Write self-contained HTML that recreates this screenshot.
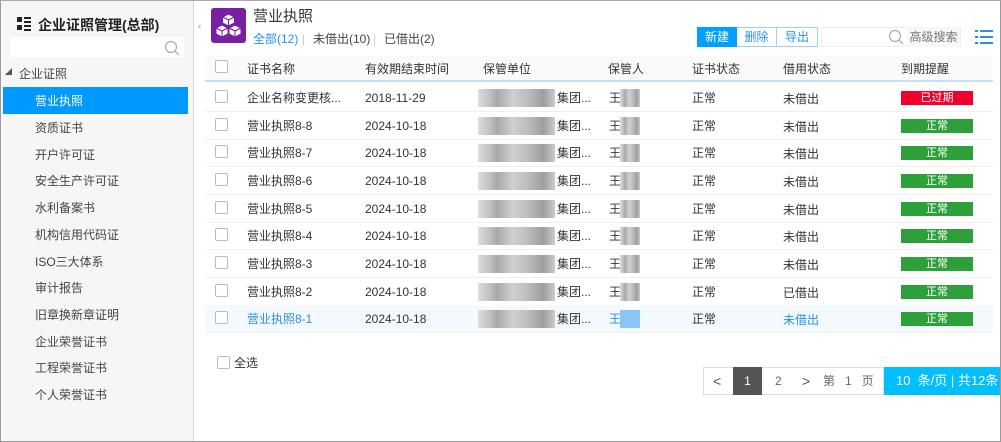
<!DOCTYPE html>
<html><head><meta charset="utf-8"><style>
*{margin:0;padding:0;box-sizing:border-box}
body{width:1001px;height:442px;overflow:hidden;background:#fff;font-family:"Liberation Sans","Noto Sans CJK SC",sans-serif;font-size:12px;color:#333;position:relative}
.a{position:absolute;white-space:nowrap;line-height:14px}
#frame{position:absolute;left:0;top:0;width:1001px;height:442px;border:1px solid #9a9a9a;border-top-color:#aaa;pointer-events:none}
#side{position:absolute;left:1px;top:1px;width:193px;height:440px;background:#f6f6f6;border-right:1px solid #d8d8d8}
.cb{position:absolute;width:13px;height:13px;border:1px solid #bbb;border-radius:2px;background:#fff}
.row{position:absolute;left:205px;width:788px;height:28px;border-bottom:1px solid #eef0f2}
.blur{position:absolute;height:18px;background:linear-gradient(90deg,#ddd 0,#c8c8c8 12%,#a8a8a8 25%,#d0d0d0 45%,#bcbcbc 65%,#9e9e9e 85%,#ccc 100%)}
.badge{position:absolute;left:696px;top:7px;width:72px;height:14px;background:#2ea03a;color:#fff;text-align:center;font-size:11px;line-height:14px}
.si{position:absolute;left:35px;color:#444;line-height:14px;white-space:nowrap}
</style></head><body>
<div id="side"></div>
<div class="a" style="left:17px;top:17px;width:14px;height:14px">
<div style="position:absolute;left:0;top:0;width:5px;height:5px;background:#222"></div>
<div style="position:absolute;left:0;top:8px;width:5px;height:5px;background:#222"></div>
<div style="position:absolute;left:7px;top:0;width:7px;height:2px;background:#222"></div>
<div style="position:absolute;left:7px;top:4px;width:7px;height:2px;background:#222"></div>
<div style="position:absolute;left:7px;top:8px;width:7px;height:2px;background:#222"></div>
<div style="position:absolute;left:7px;top:12px;width:7px;height:2px;background:#222"></div>
</div>
<div class="a" style="left:38px;top:17px;font-size:14px;line-height:16px;font-weight:bold;color:#222">企业证照管理(总部)</div>
<div class="a" style="left:10px;top:37px;width:174px;height:20px;background:#fff"></div>
<svg class="a" style="left:164px;top:40px" width="16" height="16"><circle cx="7" cy="7" r="5.5" fill="none" stroke="#aaa" stroke-width="1.2"/><line x1="11" y1="11" x2="15" y2="15" stroke="#aaa" stroke-width="1.2"/></svg>
<div class="a" style="left:5px;top:69px;font-size:7px;line-height:8px;color:#555">◢</div>
<div class="a" style="left:19px;top:67px;color:#444">企业证照</div>
<div class="a" style="left:3px;top:87px;width:185px;height:27px;background:#0099ff"></div>
<div class="a" style="left:35px;top:94px;color:#fff">营业执照</div>
<div class="si" style="top:121px">资质证书</div>
<div class="si" style="top:147.7px">开户许可证</div>
<div class="si" style="top:174.4px">安全生产许可证</div>
<div class="si" style="top:201.1px">水利备案书</div>
<div class="si" style="top:227.8px">机构信用代码证</div>
<div class="si" style="top:254.5px">ISO三大体系</div>
<div class="si" style="top:281.2px">审计报告</div>
<div class="si" style="top:307.9px">旧章换新章证明</div>
<div class="si" style="top:334.6px">企业荣誉证书</div>
<div class="si" style="top:361.3px">工程荣誉证书</div>
<div class="si" style="top:388px">个人荣誉证书</div>
<div class="a" style="left:198px;top:20px;color:#999;font-size:10px">‹</div>
<div class="a" style="left:211px;top:8px;width:35px;height:35px;background:#7b1fa2;border-radius:3px"></div>
<svg class="a" style="left:214px;top:11px" width="29" height="29" viewBox="0 0 29 29"><g fill="#fff" stroke="#7b1fa2" stroke-width="1"><path d="M14.5 3l6 3-6 3-6-3z"/><path d="M8.5 6l6 3v6l-6-3z"/><path d="M20.5 6l-6 3v6l6-3z"/><path d="M8 14l6 3-6 3-6-3z"/><path d="M2 17l6 3v6l-6-3z"/><path d="M14 17l-6 3v6l6-3z"/><path d="M21 14l6 3-6 3-6-3z"/><path d="M15 17l6 3v6l-6-3z"/><path d="M27 17l-6 3v6l6-3z"/></g></svg>
<div class="a" style="left:253px;top:8px;font-size:15px;line-height:18px;color:#333">营业执照</div>
<div class="a" style="left:253px;top:32px;color:#1e90ff">全部(12)</div>
<div class="a" style="left:302px;top:32px;color:#ccc">|</div>
<div class="a" style="left:313px;top:32px;color:#444">未借出(10)</div>
<div class="a" style="left:373px;top:32px;color:#ccc">|</div>
<div class="a" style="left:384px;top:32px;color:#444">已借出(2)</div>
<div class="a" style="left:697px;top:27px;width:121px;height:20px;border:1px solid #9ccff5"></div>
<div class="a" style="left:697px;top:27px;width:40px;height:20px;background:#00a0ff;color:#fff;text-align:center;line-height:20px">新建</div>
<div class="a" style="left:737px;top:27px;width:40px;height:20px;color:#2a8fe8;text-align:center;line-height:20px;border-right:1px solid #9ccff5">删除</div>
<div class="a" style="left:777px;top:27px;width:40px;height:20px;color:#2a8fe8;text-align:center;line-height:20px">导出</div>
<div class="a" style="left:821px;top:27px;width:140px;height:20px;background:#fff;border:1px solid #eee"></div>
<svg class="a" style="left:888px;top:29px" width="16" height="16"><circle cx="7" cy="7" r="5.5" fill="none" stroke="#aaa" stroke-width="1.2"/><line x1="11" y1="11" x2="15" y2="15" stroke="#aaa" stroke-width="1.2"/></svg>
<div class="a" style="left:907px;top:27px;width:53px;height:20px;background:#f7f7f7;color:#777;text-align:center;line-height:20px">高级搜索</div>
<svg class="a" style="left:975px;top:30px" width="18" height="14"><g fill="#2a8fe8"><rect x="0" y="0" width="3" height="2"/><rect x="5" y="0" width="13" height="2"/><rect x="0" y="6" width="3" height="2"/><rect x="5" y="6" width="13" height="2"/><rect x="0" y="12" width="3" height="2"/><rect x="5" y="12" width="13" height="2"/></g></svg>
<div class="a" style="left:205px;top:56px;width:788px;height:26px;background:#fafafa;border-bottom:2px solid #bfe0f7"></div>
<div class="cb" style="left:215px;top:60px"></div>
<div class="a" style="left:247px;top:62px">证书名称</div>
<div class="a" style="left:365px;top:62px">有效期结束时间</div>
<div class="a" style="left:483px;top:62px">保管单位</div>
<div class="a" style="left:608px;top:62px">保管人</div>
<div class="a" style="left:692px;top:62px">证书状态</div>
<div class="a" style="left:783px;top:62px">借用状态</div>
<div class="a" style="left:901px;top:62px">到期提醒</div>

<div class="row" style="top:84px"><div class="cb" style="left:10px;top:6px"></div><div class="a" style="left:42px;top:7px">企业名称变更核...</div><div class="a" style="left:160px;top:7px">2018-11-29</div><div class="blur" style="left:273px;top:5px;width:77px"></div><div class="a" style="left:352px;top:7px">集团...</div><div class="a" style="left:404px;top:7px">王</div><div class="blur" style="left:415px;top:5px;width:20px"></div><div class="a" style="left:487px;top:7px">正常</div><div class="a" style="left:578px;top:8px">未借出</div><div class="badge" style="background:#f0002a">已过期</div></div>
<div class="row" style="top:112px"><div class="cb" style="left:10px;top:6px"></div><div class="a" style="left:42px;top:7px">营业执照8-8</div><div class="a" style="left:160px;top:7px">2024-10-18</div><div class="blur" style="left:273px;top:5px;width:77px"></div><div class="a" style="left:352px;top:7px">集团...</div><div class="a" style="left:404px;top:7px">王</div><div class="blur" style="left:415px;top:5px;width:20px"></div><div class="a" style="left:487px;top:7px">正常</div><div class="a" style="left:578px;top:8px">未借出</div><div class="badge">正常</div></div>
<div class="row" style="top:139px"><div class="cb" style="left:10px;top:6px"></div><div class="a" style="left:42px;top:7px">营业执照8-7</div><div class="a" style="left:160px;top:7px">2024-10-18</div><div class="blur" style="left:273px;top:5px;width:77px"></div><div class="a" style="left:352px;top:7px">集团...</div><div class="a" style="left:404px;top:7px">王</div><div class="blur" style="left:415px;top:5px;width:20px"></div><div class="a" style="left:487px;top:7px">正常</div><div class="a" style="left:578px;top:8px">未借出</div><div class="badge">正常</div></div>
<div class="row" style="top:167px"><div class="cb" style="left:10px;top:6px"></div><div class="a" style="left:42px;top:7px">营业执照8-6</div><div class="a" style="left:160px;top:7px">2024-10-18</div><div class="blur" style="left:273px;top:5px;width:77px"></div><div class="a" style="left:352px;top:7px">集团...</div><div class="a" style="left:404px;top:7px">王</div><div class="blur" style="left:415px;top:5px;width:20px"></div><div class="a" style="left:487px;top:7px">正常</div><div class="a" style="left:578px;top:8px">未借出</div><div class="badge">正常</div></div>
<div class="row" style="top:195px"><div class="cb" style="left:10px;top:6px"></div><div class="a" style="left:42px;top:7px">营业执照8-5</div><div class="a" style="left:160px;top:7px">2024-10-18</div><div class="blur" style="left:273px;top:5px;width:77px"></div><div class="a" style="left:352px;top:7px">集团...</div><div class="a" style="left:404px;top:7px">王</div><div class="blur" style="left:415px;top:5px;width:20px"></div><div class="a" style="left:487px;top:7px">正常</div><div class="a" style="left:578px;top:8px">未借出</div><div class="badge">正常</div></div>
<div class="row" style="top:222px"><div class="cb" style="left:10px;top:6px"></div><div class="a" style="left:42px;top:7px">营业执照8-4</div><div class="a" style="left:160px;top:7px">2024-10-18</div><div class="blur" style="left:273px;top:5px;width:77px"></div><div class="a" style="left:352px;top:7px">集团...</div><div class="a" style="left:404px;top:7px">王</div><div class="blur" style="left:415px;top:5px;width:20px"></div><div class="a" style="left:487px;top:7px">正常</div><div class="a" style="left:578px;top:8px">未借出</div><div class="badge">正常</div></div>
<div class="row" style="top:250px"><div class="cb" style="left:10px;top:6px"></div><div class="a" style="left:42px;top:7px">营业执照8-3</div><div class="a" style="left:160px;top:7px">2024-10-18</div><div class="blur" style="left:273px;top:5px;width:77px"></div><div class="a" style="left:352px;top:7px">集团...</div><div class="a" style="left:404px;top:7px">王</div><div class="blur" style="left:415px;top:5px;width:20px"></div><div class="a" style="left:487px;top:7px">正常</div><div class="a" style="left:578px;top:8px">未借出</div><div class="badge">正常</div></div>
<div class="row" style="top:278px"><div class="cb" style="left:10px;top:6px"></div><div class="a" style="left:42px;top:7px">营业执照8-2</div><div class="a" style="left:160px;top:7px">2024-10-18</div><div class="blur" style="left:273px;top:5px;width:77px"></div><div class="a" style="left:352px;top:7px">集团...</div><div class="a" style="left:404px;top:7px">王</div><div class="blur" style="left:415px;top:5px;width:20px"></div><div class="a" style="left:487px;top:7px">正常</div><div class="a" style="left:578px;top:8px">已借出</div><div class="badge">正常</div></div>
<div class="row" style="top:305px;background:#f3f9fd"><div class="cb" style="left:10px;top:6px"></div><div class="a" style="left:42px;top:7px;color:#2a8fe8">营业执照8-1</div><div class="a" style="left:160px;top:7px">2024-10-18</div><div class="blur" style="left:273px;top:5px;width:77px"></div><div class="a" style="left:352px;top:7px">集团...</div><div class="a" style="left:404px;top:7px;color:#2a8fe8">王</div><div class="blur" style="left:415px;top:5px;width:20px;background:#8cc4f5"></div><div class="a" style="left:487px;top:7px">正常</div><div class="a" style="left:578px;top:8px;color:#2a8fe8">未借出</div><div class="badge">正常</div></div>

<div class="cb" style="left:217px;top:356px"></div>
<div class="a" style="left:234px;top:356px">全选</div>
<div class="a" style="left:703px;top:367px;width:181px;height:28px;border:1px solid #ddd;background:#fff"></div>
<div class="a" style="left:713px;top:374px;font-size:14px;color:#555">&lt;</div>
<div class="a" style="left:733px;top:367px;width:29px;height:28px;background:#555;color:#fff;text-align:center;line-height:28px">1</div>
<div class="a" style="left:775px;top:374px;color:#666">2</div>
<div class="a" style="left:802px;top:374px;font-size:14px;color:#555">&gt;</div>
<div class="a" style="left:823px;top:374px;color:#666">第&nbsp;&nbsp;&nbsp;1&nbsp;&nbsp;&nbsp;页</div>
<div class="a" style="left:884px;top:367px;width:116px;height:28px;background:#00bfff;color:#fff;line-height:28px;padding-left:12px;font-size:13px">10&nbsp;&nbsp;条/页 | 共12条</div>
<div id="frame"></div>
</body></html>
